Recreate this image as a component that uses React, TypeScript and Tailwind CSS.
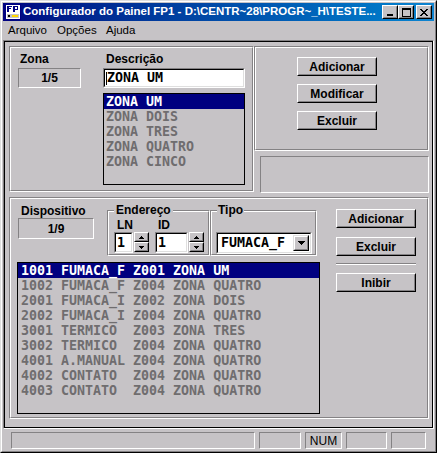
import React from "react";

const FACE = "bg-[#c6c3c6]";

function Btn({ className = "", children }: { className?: string; children?: React.ReactNode }) {
  return (
    <div className={`flex border border-t-white border-l-white border-b-black border-r-black ${className}`}>
      <div className="flex flex-1 items-center justify-center border border-t-[#c6c3c6] border-l-[#c6c3c6] border-b-[#848284] border-r-[#848284] text-[12px] font-bold leading-none text-black">
        {children}
      </div>
    </div>
  );
}

function Etched({ className = "", innerClassName = "", children }: { className?: string; innerClassName?: string; children?: React.ReactNode }) {
  return (
    <div className={`border border-t-[#848284] border-l-[#848284] border-b-white border-r-white ${className}`}>
      <div className={`h-full border border-t-white border-l-white border-b-[#848284] border-r-[#848284] ${innerClassName}`}>{children}</div>
    </div>
  );
}

function Sunken({ className = "", innerClassName = "", children }: { className?: string; innerClassName?: string; children?: React.ReactNode }) {
  return (
    <div className={`border border-t-[#848284] border-l-[#848284] border-b-white border-r-white ${className}`}>
      <div className={`h-full border border-t-black border-l-black border-b-[#dfdfdf] border-r-[#dfdfdf] bg-white ${innerClassName}`}>{children}</div>
    </div>
  );
}

function Tri({ up }: { up?: boolean }) {
  return (
    <svg width="5" height="3" viewBox="0 0 5 3" shapeRendering="crispEdges">
      {up ? (
        <g fill="#000">
          <rect x="2" y="0" width="1" height="1" />
          <rect x="1" y="1" width="3" height="1" />
          <rect x="0" y="2" width="5" height="1" />
        </g>
      ) : (
        <g fill="#000">
          <rect x="0" y="0" width="5" height="1" />
          <rect x="1" y="1" width="3" height="1" />
          <rect x="2" y="2" width="1" height="1" />
        </g>
      )}
    </svg>
  );
}

function SmallBtn({ up }: { up?: boolean }) {
  return (
    <div className="flex h-[10px] w-[15px] border border-t-white border-l-white border-b-black border-r-black">
      <div className="flex flex-1 items-center justify-center border border-t-[#c6c3c6] border-l-[#c6c3c6] border-b-[#848284] border-r-[#848284]">
        <Tri up={up} />
      </div>
    </div>
  );
}

function Spin() {
  return (
    <div className="flex flex-col">
      <SmallBtn up />
      <SmallBtn />
    </div>
  );
}

function TitleBtn({ children, className = "" }: { children: React.ReactNode; className?: string }) {
  return (
    <div className={`flex h-[14px] w-[16px] border border-t-white border-l-white border-b-black border-r-black bg-[#c6c3c6] ${className}`}>
      <div className="flex flex-1 items-center justify-center border border-t-[#c6c3c6] border-l-[#c6c3c6] border-b-[#848284] border-r-[#848284]">
        {children}
      </div>
    </div>
  );
}

const MONO = "font-['DejaVu_Sans_Mono',monospace] font-bold text-[13.3px]";

const zonas = ["ZONA UM", "ZONA DOIS", "ZONA TRES", "ZONA QUATRO", "ZONA CINCO"];
const devices = [
  "1001 FUMACA_F Z001 ZONA UM",
  "1002 FUMACA_F Z004 ZONA QUATRO",
  "2001 FUMACA_I Z002 ZONA DOIS",
  "2002 FUMACA_I Z004 ZONA QUATRO",
  "3001 TERMICO  Z003 ZONA TRES",
  "3002 TERMICO  Z004 ZONA QUATRO",
  "4001 A.MANUAL Z004 ZONA QUATRO",
  "4002 CONTATO  Z004 ZONA QUATRO",
  "4003 CONTATO  Z004 ZONA QUATRO",
];

export default function App() {
  return (
    <div className={`h-[453px] w-[437px] ${FACE} border border-t-[#dfdfdf] border-l-[#dfdfdf] border-b-black border-r-black font-['Liberation_Sans',Arial,sans-serif] text-black`}>
      <div className="flex h-full flex-col border border-t-white border-l-white border-b-[#848284] border-r-[#848284] p-[1px]">
        {/* Title bar */}
        <div className="flex h-[18px] shrink-0 items-center bg-linear-to-r from-[#000080] to-[#1084d0] pl-[2px] pr-[2px]">
          <svg width="16" height="16" viewBox="0 0 16 16" shapeRendering="crispEdges">
            <rect x="0" y="0" width="16" height="16" fill="#000080" />
            <rect x="1" y="1" width="14" height="14" fill="#ffffff" />
            <rect x="2" y="2" width="2" height="6" fill="#000080" />
            <rect x="4" y="2" width="3" height="1" fill="#000080" />
            <rect x="4" y="4" width="2" height="1" fill="#000080" />
            <rect x="8" y="2" width="2" height="6" fill="#000080" />
            <rect x="10" y="2" width="3" height="1" fill="#000080" />
            <rect x="12" y="3" width="1" height="2" fill="#000080" />
            <rect x="10" y="5" width="3" height="1" fill="#000080" />
            <rect x="2" y="10" width="12" height="4" fill="#c6c3c6" />
            <rect x="3" y="11" width="2" height="2" fill="#000000" />
            <rect x="7" y="11" width="6" height="2" fill="#ffd800" />
          </svg>
          <span className="ml-[2px] flex-1 whitespace-nowrap text-[11.5px] font-bold leading-none text-white">
            Configurador do Painel FP1 - D:\CENTR~28\PROGR~_H\TESTE...
          </span>
          <TitleBtn>
            <svg width="8" height="7" viewBox="0 0 8 7" shapeRendering="crispEdges">
              <rect x="1" y="5" width="6" height="2" fill="#000" />
            </svg>
          </TitleBtn>
          <TitleBtn>
            <svg width="9" height="9" viewBox="0 0 9 9" shapeRendering="crispEdges">
              <rect x="0" y="0" width="9" height="2" fill="#000" />
              <rect x="0" y="0" width="1" height="9" fill="#000" />
              <rect x="8" y="0" width="1" height="9" fill="#000" />
              <rect x="0" y="8" width="9" height="1" fill="#000" />
            </svg>
          </TitleBtn>
          <TitleBtn className="ml-[2px]">
            <svg width="8" height="7" viewBox="0 0 8 7" shapeRendering="crispEdges" fill="#000">
              <rect x="0" y="0" width="2" height="1" />
              <rect x="6" y="0" width="2" height="1" />
              <rect x="1" y="1" width="2" height="1" />
              <rect x="5" y="1" width="2" height="1" />
              <rect x="2" y="2" width="4" height="1" />
              <rect x="3" y="3" width="2" height="1" />
              <rect x="2" y="4" width="4" height="1" />
              <rect x="1" y="5" width="2" height="1" />
              <rect x="5" y="5" width="2" height="1" />
              <rect x="0" y="6" width="2" height="1" />
              <rect x="6" y="6" width="2" height="1" />
            </svg>
          </TitleBtn>
        </div>

        {/* Menu bar */}
        <div className="flex h-[19px] shrink-0 items-center pl-[5px] text-[11.5px] leading-[19px]">
          <span className="w-[49px]">Arquivo</span>
          <span className="w-[49px]">Opções</span>
          <span>Ajuda</span>
        </div>

        {/* Client area */}
        <div className="h-[389px] shrink-0 border border-t-[#848284] border-l-[#848284] border-b-white border-r-white">
          <div className="h-full border border-black pl-[4px] pt-[4px]">
            {/* Top row */}
            <div className="flex">
              <Etched className="h-[146px] w-[245px]" innerClassName="flex">
                <div className="ml-[7px] mt-[4px] flex w-[63px] flex-col">
                  <span className="pl-[2px] text-[12px] font-bold leading-[14px]">Zona</span>
                  <div className="mt-[2px] flex h-[20px] items-center justify-center border border-t-[#848284] border-l-[#848284] border-b-white border-r-white text-[12px] font-bold">
                    1/5
                  </div>
                </div>
                <div className="ml-[22px] mt-[4px] flex w-[142px] flex-col">
                  <span className="pl-[3px] text-[12px] font-bold leading-[14px]">Descrição</span>
                  <Sunken className="mt-[2px] h-[20px]" innerClassName="flex items-center pl-[1px]">
                    <span className="h-[13px] w-[1px] bg-black" />
                    <span className={`${MONO} leading-[16px]`}>ZONA UM</span>
                  </Sunken>
                  <div className="mt-[5px] h-[92px] border border-black">
                    {zonas.map((z, i) => (
                      <div
                        key={z}
                        className={`h-[15px] pl-[2px] ${MONO} leading-[16px] whitespace-pre ${i === 0 ? "bg-[#000080] text-white" : "text-[#6f6d6f]"}`}
                      >
                        {z}
                      </div>
                    ))}
                  </div>
                </div>
              </Etched>
              <div className="flex w-[175px] flex-col">
                <Etched className="h-[105px]" innerClassName="flex flex-col pl-[41px] pt-[9px] gap-[8px]">
                  <Btn className="h-[19px] w-[80px]">Adicionar</Btn>
                  <Btn className="h-[19px] w-[80px]">Modificar</Btn>
                  <Btn className="h-[19px] w-[80px]">Excluir</Btn>
                </Etched>
                <div className="ml-[6px] mt-[5px] h-[37px] w-[169px] border border-t-[#848284] border-l-[#848284] border-b-white border-r-white" />
              </div>
            </div>

            {/* Bottom frame */}
            <Etched className="mt-[4px] h-[222px] w-[420px]" innerClassName="flex">
              <div className="flex flex-col pl-[6px]">
                <div className="flex h-[57px]">
                  <div className="ml-[1px] mt-[5px] flex w-[76px] flex-col">
                    <span className="pl-[3px] text-[12px] font-bold leading-[14px]">Dispositivo</span>
                    <div className="flex h-[21px] items-center justify-center border border-t-[#848284] border-l-[#848284] border-b-white border-r-white text-[12px] font-bold">
                      1/9
                    </div>
                  </div>
                  <div className="relative ml-[13px] mt-[11px] h-[46px] w-[103px]">
                    <Etched className="h-full" innerClassName="flex gap-[6px] pl-[5px] pt-[6px]">
                      <div className="flex flex-col">
                        <span className="pl-[3px] text-[12px] font-bold leading-[14px]">LN</span>
                        <div className="flex gap-[1px]">
                          <Sunken className="h-[21px] w-[19px]" innerClassName="flex items-center pl-[1px]">
                            <span className={`${MONO} leading-[16px]`}>1</span>
                          </Sunken>
                          <Spin />
                        </div>
                      </div>
                      <div className="flex flex-col">
                        <span className="pl-[3px] text-[12px] font-bold leading-[14px]">ID</span>
                        <div className="flex gap-[1px]">
                          <Sunken className="h-[21px] w-[33px]" innerClassName="flex items-center pl-[1px]">
                            <span className={`${MONO} leading-[16px]`}>1</span>
                          </Sunken>
                          <Spin />
                        </div>
                      </div>
                    </Etched>
                    <span className={`absolute -top-[7px] left-[7px] ${FACE} px-[2px] text-[12px] font-bold leading-[14px]`}>Endereço</span>
                  </div>
                  <div className="relative mt-[11px] h-[46px] w-[107px]">
                    <Etched className="h-full" innerClassName="pl-[4px] pt-[20px]">
                      <Sunken className="h-[22px] w-[96px]" innerClassName="flex items-center justify-between pl-[3px] pr-[1px]">
                        <span className={`${MONO} leading-[16px]`}>FUMACA_F</span>
                        <div className="flex h-[16px] w-[16px] border border-t-[#dfdfdf] border-l-[#dfdfdf] border-b-black border-r-black">
                          <div className={`flex flex-1 items-center justify-center border border-t-white border-l-white border-b-[#848284] border-r-[#848284] ${FACE}`}>
                            <svg width="7" height="4" viewBox="0 0 7 4" shapeRendering="crispEdges" fill="#000">
                              <rect x="0" y="0" width="7" height="1" />
                              <rect x="1" y="1" width="5" height="1" />
                              <rect x="2" y="2" width="3" height="1" />
                              <rect x="3" y="3" width="1" height="1" />
                            </svg>
                          </div>
                        </div>
                      </Sunken>
                    </Etched>
                    <span className={`absolute -top-[7px] left-[7px] ${FACE} px-[1px] text-[12px] font-bold leading-[14px]`}>Tipo</span>
                  </div>
                </div>
                <div className="mt-[6px] h-[152px] w-[303px] border border-black">
                  {devices.map((d, i) => (
                    <div
                      key={d}
                      className={`h-[15px] pl-[3px] ${MONO} leading-[16px] whitespace-pre ${i === 0 ? "bg-[#000080] text-white" : "text-[#6f6d6f]"}`}
                    >
                      {d}
                    </div>
                  ))}
                </div>
              </div>
              <div className="ml-[16px] mt-[10px] flex w-[80px] flex-col">
                <Btn className="h-[19px] w-[80px]">Adicionar</Btn>
                <Btn className="mt-[9px] h-[19px] w-[80px]">Excluir</Btn>
                <div className="mt-[7px] h-[2px] w-[80px] border-t border-t-[#848284] border-b border-b-white" />
                <Btn className="mt-[8px] h-[19px] w-[80px]">Inibir</Btn>
              </div>
            </Etched>
          </div>
        </div>

        {/* Status bar */}
        <div className="flex h-[21px] shrink-0 gap-[4px] pl-[8px] pt-[3px]">
          <div className="h-[17px] w-[244px] border border-t-[#848284] border-l-[#848284] border-b-white border-r-white" />
          <div className="h-[17px] w-[42px] border border-t-[#848284] border-l-[#848284] border-b-white border-r-white" />
          <div className="flex h-[17px] w-[37px] items-center justify-center border border-t-[#848284] border-l-[#848284] border-b-white border-r-white text-[12px] leading-none">
            NUM
          </div>
          <div className="h-[17px] w-[41px] border border-t-[#848284] border-l-[#848284] border-b-white border-r-white" />
          <div className="h-[17px] w-[35px] border border-t-[#848284] border-l-[#848284] border-b-white border-r-white" />
        </div>
      </div>
    </div>
  );
}
